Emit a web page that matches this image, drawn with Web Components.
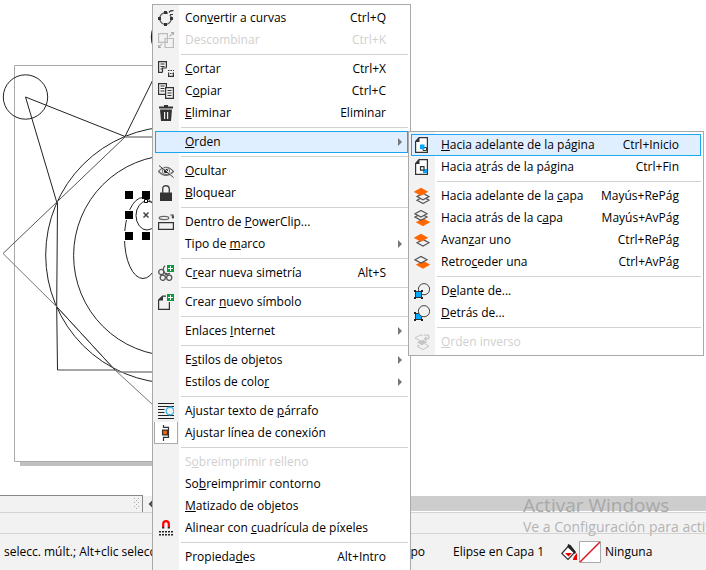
<!DOCTYPE html>
<html lang="es">
<head>
<meta charset="utf-8">
<title>Editor de dibujo</title>
<style>
  html, body { margin: 0; height: 100%; overflow: hidden; }
  body { font: 12px/16px "Open Sans", "Noto Sans", sans-serif; color: #000; background: #fff; }
</style>
</head>
<body>
<app-window>
  <drawing-canvas></drawing-canvas>
  <page-strip slot="bars"></page-strip>
  <status-bar slot="bars">
    <span slot="hint">selecc. múlt.; Alt+clic selecc</span>
    <span slot="group">Grupo</span>
    <span slot="object">Elipse en Capa 1</span>
    <span slot="fill">Ninguna</span>
  </status-bar>

  <context-menu slot="menu" label="Menú contextual">
    <menu-item icon="curves" keys="Ctrl+Q">Con<u>v</u>ertir a curvas</menu-item>
    <menu-item icon="uncombine" keys="Ctrl+K" disabled>Descombinar</menu-item>
    <menu-separator></menu-separator>
    <menu-item icon="cut" keys="Ctrl+X"><u>C</u>ortar</menu-item>
    <menu-item icon="copy" keys="Ctrl+C">C<u>o</u>piar</menu-item>
    <menu-item icon="trash" keys="Eliminar"><u>E</u>liminar</menu-item>
    <menu-separator></menu-separator>
    <menu-item active submenu><u>O</u>rden</menu-item>
    <menu-separator></menu-separator>
    <menu-item icon="hide"><u>O</u>cultar</menu-item>
    <menu-item icon="lock"><u>B</u>loquear</menu-item>
    <menu-separator></menu-separator>
    <menu-item icon="clip">Dentro de <u>P</u>owerClip...</menu-item>
    <menu-item submenu>Tipo de <u>m</u>arco</menu-item>
    <menu-separator></menu-separator>
    <menu-item icon="symmetry" keys="Alt+S">C<u>r</u>ear nueva simetría</menu-item>
    <menu-separator></menu-separator>
    <menu-item icon="symbol">Crear <u>n</u>uevo símbolo</menu-item>
    <menu-separator></menu-separator>
    <menu-item submenu>Enlaces <u>I</u>nternet</menu-item>
    <menu-separator></menu-separator>
    <menu-item submenu>E<u>s</u>tilos de objetos</menu-item>
    <menu-item submenu>Estilos de colo<u>r</u></menu-item>
    <menu-separator></menu-separator>
    <menu-item icon="wrap">Ajustar texto de <u>p</u>árrafo</menu-item>
    <menu-item icon="connector" checked>A<u>j</u>ustar línea de conexión</menu-item>
    <menu-separator></menu-separator>
    <menu-item disabled>S<u>o</u>breimprimir relleno</menu-item>
    <menu-item>So<u>b</u>reimprimir contorno</menu-item>
    <menu-item><u>M</u>atizado de objetos</menu-item>
    <menu-item icon="magnet">Alinear con <u>c</u>uadrícula de píxeles</menu-item>
    <menu-separator></menu-separator>
    <menu-item keys="Alt+Intro">Propieda<u>d</u>es</menu-item>
  </context-menu>

  <context-menu slot="submenu" label="Orden">
    <menu-item icon="page-front" keys="Ctrl+Inicio" active><u>H</u>acia adelante de la página</menu-item>
    <menu-item icon="page-back" keys="Ctrl+Fin">Hacia a<u>t</u>rás de la página</menu-item>
    <menu-separator></menu-separator>
    <menu-item icon="layer-front" keys="Mayús+RePág">Hacia adelante de la <u>c</u>apa</menu-item>
    <menu-item icon="layer-back" keys="Mayús+AvPág">Hacia atrás de la c<u>a</u>pa</menu-item>
    <menu-item icon="forward" keys="Ctrl+RePág">Avan<u>z</u>ar uno</menu-item>
    <menu-item icon="backward" keys="Ctrl+AvPág">Retro<u>c</u>eder una</menu-item>
    <menu-separator></menu-separator>
    <menu-item icon="in-front">D<u>e</u>lante de...</menu-item>
    <menu-item icon="behind"><u>D</u>etrás de...</menu-item>
    <menu-separator></menu-separator>
    <menu-item icon="reverse" disabled><u>O</u>rden inverso</menu-item>
  </context-menu>

  <activation-notice slot="notice">
    <span slot="title">Activar Windows</span>
    Ve a Configuración para activar Windows.
  </activation-notice>
</app-window>

<script>
const plus = '<path fill="#0a9a3c" d="M9 0h7v7H9z"/><path stroke="#fff" d="M10 3.5h5M12.5 1v5"/>';
const diamond = (cx, cy, attrs) =>
  `<path d="M${cx - 6} ${cy}L${cx} ${cy - 3.3}L${cx + 6} ${cy}L${cx} ${cy + 3.3}Z" ${attrs}/>`;
const hollow = 'fill="#f2f2f2" stroke="#555" stroke-width="1.2"';
const solid = 'fill="#f60" stroke="#f60" stroke-width="1.2"';
const page = '<path stroke="#333" stroke-width="1.2" fill="#fff" d="M5 .6h8.4v14.8H1.6V4.5Z"/><path fill="#333" d="M5.5 0v5H1Z"/>';

const ICONS = {
  curves: `<circle cx="7.5" cy="8.5" r="5.8" stroke="#555" stroke-width="1.3"/>
    <path fill="#f2f2f2" d="M10 0h6v5h-6z"/>
    <path fill="#333" d="M0 7h3v3H0zM12 7h3v3h-3zM6 13h3v3H6zM6 1h3v3H6z"/>
    <path stroke="#333" stroke-width="1.2" d="M11 2.5 12.5.8 15.5.6M12 4.5h3"/>`,
  uncombine: `<g stroke="#bbb" stroke-width="1.2"><path d="M.6 1.6h8.8v8.8H.6z"/>
    <path fill="#f2f2f2" d="M7 6.5h8.4v9H7z"/><path d="M7 10.4h2.4V6.5"/>
    <path d="M11.5 4.5 15 1M0 15.5 4 12"/></g>
    <path fill="#aaa" d="M12.5 0H16v3.5ZM0 12.5V16h3.5Z"/>`,
  cut: `<path stroke="#333" stroke-width="1.2" d="M8.4 6.5V.6H.6v10.8h4M2.5 3h4M2.5 5.5h4M2.500 8H4M4.500 11V7h4"/>
    <path stroke="#333" stroke-width="1.2" d="M10.600 11.500v3.900h4.800v-3.900"/>
    <path stroke="#333" stroke-dasharray="1.5 1" d="M10 9.5h6M12 12.5h3"/>`,
  copy: `<g stroke="#333" stroke-width="1.2"><path d="M.6.6h7.8v10.8H.6zM2.5 3h4M2.5 5.5h4M2.5 8h4"/>
    <path fill="#f2f2f2" d="M7.6 4.6h7.8v10.8H7.6z"/><path d="M9.5 7.5h4M9.5 10h4M9.5 12.5h4"/></g>`,
  trash: `<path fill="#333" fill-rule="evenodd" d="M6 0h4v1.5h5v2H1v-2h5ZM2 4.5h12L13 16H3ZM6 7v7h1.2V7ZM9 7v7h1.2V7Z"/>`,
  hide: `<path stroke="#666" stroke-width="1.2" d="M.5 8.5Q8 0 15.5 8.5Q8 16 .5 8.5Z"/>
    <circle cx="8" cy="8" r="3.7" stroke="#777"/><circle cx="8" cy="8" r="2.2" fill="#222"/>
    <path stroke="#f2f2f2" d="M2 2l14 12"/><path stroke="#444" d="M1 2.5 15.5 14.5"/>`,
  lock: `<path fill="#333" d="M2 7.5h12V16H2z"/><path stroke="#444" stroke-width="1.4" d="M4.7 8V4Q4.7.7 8 .7T11.3 4V8"/>`,
  clip: `<ellipse cx="6" cy="4" rx="4.8" ry="1.6" stroke="#666" stroke-width="1.2"/>
    <path stroke="#333" stroke-width="1.2" d="M.6 8.6h14.8v6.8H.6zM12.5 1h2.5v3"/><path fill="#333" d="M13.4 2.5h3L15 5Z"/>`,
  symmetry: `<g stroke="#555" stroke-width="1.3"><circle cx="3.3" cy="7" r="2.6"/><circle cx="4.8" cy="12.8" r="2.6"/>
    <circle cx="11.2" cy="12.8" r="2.6"/><path d="M8 9.5Q3 4 7 .8M8 9.5l4-1"/></g><circle cx="8" cy="9" r="1.2" fill="#555"/>${plus}`,
  symbol: `<path stroke="#333" stroke-width="1.2" d="M8 2.1H4.5L.6 6v9.4h10.8V8"/><path fill="#333" d="M5 2v4.5H0Z"/>${plus}`,
  wrap: `<path stroke="#222" stroke-width="1.2" d="M0 .5h16M0 3.5h16M0 6.5h6.5M0 9.5h6.5M0 12.5h16M0 15.5h16"/>
    <circle cx="12" cy="8" r="3.8" fill="#f2f2f2" stroke="#3bb8e8" stroke-width="1.4"/>`,
  connector: `<path stroke="#333" stroke-width="1.2" d="M5.5 0v2.4h5v10h-5V16"/>
    <path fill="#f60" stroke="#333" stroke-width="1.3" d="M4.6 5.1h4.8v4.8H4.6z"/>`,
  magnet: `<path stroke="#f00" stroke-width="2.2" d="M5.200 7V4Q5.200 1.200 8 1.200T10.800 4V7"/>
    <path stroke="#222" stroke-width="2.2" d="M5.200 7v1.500M10.800 7v1.500"/>
    <path stroke="#222" stroke-width="1.6" stroke-dasharray="2 1" d="M1 11.800h14M1 14.800h14"/>`,
  'page-front': `${page}<path stroke="#333" d="M9 10.5h3.5v3H9z"/><path fill="#0af" d="M6 7.5h4.5V12H6z"/>`,
  'page-back': `${page}<path fill="#0af" d="M9 10h4v4H9z"/><path fill="#fff" stroke="#333" stroke-width="1.2" d="M6.5 7.600h3.500v3.500H6.500z"/>`,
  'layer-front': diamond(9, 12.2, hollow) + diamond(9, 8.6, hollow) + diamond(7, 3.8, solid),
  'layer-back': diamond(9, 12.2, solid) + diamond(7, 7, hollow) + diamond(7, 3.8, hollow),
  forward: diamond(9, 10.7, hollow) + diamond(7, 5.8, solid),
  backward: diamond(9, 10.7, solid) + diamond(7, 5.8, hollow),
  'in-front': `<circle cx="10" cy="6.2" r="5.6" stroke="#444"/>
    <path fill="#0af" stroke="#333" d="M1.500 8.500h6v6h-6z"/>
    <path fill="#222" d="M0 7h2v2H0zM7 7h2v2H7zM0 14h2v2H0zM7 14h2v2H7z"/>`,
  behind: `<path fill="#0af" stroke="#333" d="M1.500 8.500h6v6h-6z"/>
    <circle cx="10" cy="6.2" r="5.6" fill="#f2f2f2" stroke="#444"/>
    <path fill="#222" d="M0 7h2v2H0zM0 14h2v2H0zM7 14h2v2H7z"/>`,
  reverse: diamond(9, 12.2, 'fill="#f2f2f2" stroke="#c4c4c4"') + diamond(8, 8.4, 'fill="#c4c4c4" stroke="#f2f2f2"')
    + diamond(7, 4, 'fill="#f2f2f2" stroke="#c4c4c4"')
    + '<path fill="#f2f2f2" d="M9 0h7v6H9z"/><path stroke="#c4c4c4" stroke-width="1.2" d="M10 1h4q2 2 0 4h-3M12.5 3l-2 2 2 2"/>',
  bucket: `<path fill="#fff" stroke="#333" stroke-width="1.2" d="M.8 9.5 7.5 2l6 6.5-6.5 7Z"/>
    <path fill="#222" d="M7 0l2.5 1L15 8l-1 2-7.5-7Z"/><path fill="#e00" d="M4 9h7L7.5 12.5ZM16 9v7h-4q0-3 4-7Z"/>`,
};

class UiElement extends HTMLElement {
  constructor() {
    super();
    this.attachShadow({ mode: 'open' });
  }
  connectedCallback() {
    this.shadowRoot.innerHTML = this.render();
  }
}

customElements.define('ui-icon', class extends UiElement {
  render() {
    return `<style>
      :host { display: block; flex: none; width: 16px; height: 16px; }
      svg { display: block; width: 100%; height: 100%; }
    </style>
    <svg viewBox="0 0 16 16" fill="none" aria-hidden="true">${ICONS[this.getAttribute('name')] || ''}</svg>`;
  }
});

customElements.define('menu-separator', class extends UiElement {
  render() {
    return `<style>
      :host { display: block; padding: 3px 0 3px 26px; }
      div { height: 1px; background: #d2d2d2; }
    </style><div role="separator"></div>`;
  }
});

customElements.define('menu-item', class extends UiElement {
  render() {
    const has = name => this.hasAttribute(name);
    return `<style>
      :host { display: block; }
      button {
        display: flex; align-items: center; box-sizing: border-box; width: 100%; height: 22px;
        margin: 0; padding: 0 21px 0 0; border: 1px solid transparent; background: none;
        font: inherit; color: inherit; text-align: left; white-space: nowrap;
      }
      button:disabled { color: #cfcfcf; }
      :host([active]) button { background: #e0efff; border-color: #1aa7f2; }
      .icon { display: grid; place-items: center; flex: none; box-sizing: border-box;
              width: 24px; height: 22px; margin: 0 7px 0 -2px; }
      .icon.on { background: #fff; border: 1px solid #aaa; border-top: 0; }
      .label { flex: 1; }
      .arrow { width: 0; margin-right: -16px; border: 4px solid transparent; border-left-color: #777; border-right: 0; }
    </style>
    <button type="button" role="${has('checked') ? 'menuitemcheckbox' : 'menuitem'}"
      ${has('checked') ? 'aria-checked="true"' : ''} ${has('disabled') ? 'disabled' : ''}
      ${has('submenu') ? `aria-haspopup="menu" aria-expanded="${has('active')}"` : ''}>
      <span class="icon ${has('checked') ? 'on' : ''}"><ui-icon name="${this.getAttribute('icon') || ''}"></ui-icon></span>
      <span class="label"><slot></slot></span>
      ${has('keys') ? `<span>${this.getAttribute('keys')}</span>` : ''}
      ${has('submenu') ? '<span class="arrow"></span>' : ''}
    </button>`;
  }
});

customElements.define('context-menu', class extends UiElement {
  render() {
    return `<style>
      :host { display: block; box-sizing: border-box; border: 1px solid #aaa; padding: 2px;
              background: linear-gradient(to right, #f2f2f2 26px, #fff 26px); }
    </style>
    <div role="menu" aria-label="${this.getAttribute('label')}"><slot></slot></div>`;
  }
});

customElements.define('drawing-canvas', class extends UiElement {
  render() {
    return `<style>
      :host { display: block; overflow: hidden; background: #fff; }
      svg { display: block; }
    </style>
    <svg width="360" height="490" fill="none" stroke="#222" role="img" aria-label="Dibujo">
      <path fill="#c0c0c0" stroke="none" d="M20 462h310v4H20z"/>
      <path stroke="#aaa" d="M14.5 65.5h311v396h-311z"/>
      <circle cx="25.5" cy="97" r="22.2"/>
      <circle cx="174" cy="37" r="22.5" stroke-width="1.4"/>
      <circle cx="174" cy="255" r="128.3"/>
      <circle cx="174" cy="255.5" r="100.4"/>
      <path d="M57 203 25.5 97 125 136.5 174 37"/>
      <path stroke="#888" stroke-width="1.4" d="M125 137h100M57.5 370H115l5 2h105"/>
      <path d="M57.5 203 56.7 307 57.5 370"/>
      <path stroke="#555" d="M125 137 3 253.5"/>
      <path stroke="#777" d="M3 253.5 57 307 115 370 165 416"/>
      <path stroke="#333" d="M57 307 115 370"/>
      <ellipse cx="143" cy="238" rx="18.5" ry="40.5"/>
      <ellipse cx="147" cy="215.5" rx="11" ry="14.5"/>
      <path fill="#fff" stroke="none" d="M124 190h10v10h-10zM124 210h10v10h-10zM124 231h10v10h-10z"/>
      <path fill="#000" stroke="none" d="M125 191h8v8h-8zM142 191h8v8h-8zM125 211h8v8h-8zM125 232h8v8h-8zM142 232h8v8h-8z"/>
      <path fill="#fff" stroke="#000" d="M144.5 199.5h3v3h-3z"/>
      <path stroke="#444" stroke-width="1.5" d="M143.5 212.5l5 5M148.5 212.5l-5 5"/>
    </svg>`;
  }
});

customElements.define('page-strip', class extends UiElement {
  render() {
    return `<style>
      :host { display: flex; height: 17px; background: #fff; }
      .tabs { display: flex; justify-content: flex-end; align-items: center; box-sizing: border-box; width: 143px;
              padding-right: 2px; border: 1px solid #888; border-width: 1px 1px 0 0; background: #f2f2f2; }
      button { width: 17px; margin: 1px 0 0; padding: 0 0 0 5px; border: 0; background: #f2f2f2; }
      .thumb { flex: 1; margin: 1px 0; background: #cdcdcd; }
      svg { display: block; }
    </style>
    <div class="tabs"><svg width="6" height="12" fill="#aaa" aria-hidden="true">
      <path d="M0 0h1v1H0zM4 0h1v1H4zM2 2h1v1H2zM0 4h1v1H0zM4 4h1v1H4zM2 6h1v1H2zM0 8h1v1H0zM4 8h1v1H4zM2 10h1v1H2z"/></svg></div>
    <button type="button" aria-label="Desplazar a la izquierda"><svg width="8" height="8" fill="none" stroke="#444" stroke-width="2"><path d="M6 0 2 4l4 4"/></svg></button>
    <div class="thumb"></div>`;
  }
});

customElements.define('status-bar', class extends UiElement {
  render() {
    return `<style>
      :host { display: block; background: #f2f2f2; }
      .hints { height: 20px; border: 1px solid #d4d4d4; border-width: 1px 0; }
      .row { display: flex; align-items: center; height: 36px; white-space: nowrap; }
      .hint { box-sizing: border-box; width: 320px; padding-left: 4px; }
      .group { box-sizing: border-box; width: 105px; text-align: right; }
      .object { width: 108px; padding-left: 28px; }
      .swatch { display: block; margin: 0 4px 0 2px; }
    </style>
    <div class="hints"></div>
    <div class="row">
      <div class="hint"><slot name="hint"></slot></div>
      <div class="group"><slot name="group"></slot></div>
      <div class="object"><slot name="object"></slot></div>
      <ui-icon name="bucket"></ui-icon>
      <svg class="swatch" width="22" height="22" aria-hidden="true"><path fill="#fff" stroke="#aaa" d="M.5.5h21v21H.5z"/>
        <path stroke="#e01020" stroke-width="1.5" d="M1 21 21 1"/></svg>
      <slot name="fill"></slot>
    </div>`;
  }
});

customElements.define('activation-notice', class extends UiElement {
  render() {
    return `<style>
      :host { display: block; white-space: nowrap; color: #b4b4b4; font-size: 14px; line-height: 20px; pointer-events: none; }
      h2 { margin: 0; font-size: 19px; font-weight: 400; line-height: 24px; color: #a8a8a8; }
    </style>
    <h2><slot name="title"></slot></h2><slot></slot>`;
  }
});

customElements.define('app-window', class extends UiElement {
  render() {
    return `<style>
      :host { position: relative; display: flex; flex-direction: column; height: 100vh; overflow: hidden; }
      .work { flex: 1; min-height: 0; overflow: hidden; }
      .over { position: absolute; }
      .menu { left: 152px; top: 4px; width: 259px; }
      .submenu { left: 408px; top: 131px; width: 296px; }
      .notice { left: 523px; top: 493px; }
    </style>
    <div class="work"><slot></slot></div>
    <slot name="bars"></slot>
    <div class="over menu"><slot name="menu"></slot></div>
    <div class="over submenu"><slot name="submenu"></slot></div>
    <div class="over notice"><slot name="notice"></slot></div>`;
  }
});
</script>
</body>
</html>
